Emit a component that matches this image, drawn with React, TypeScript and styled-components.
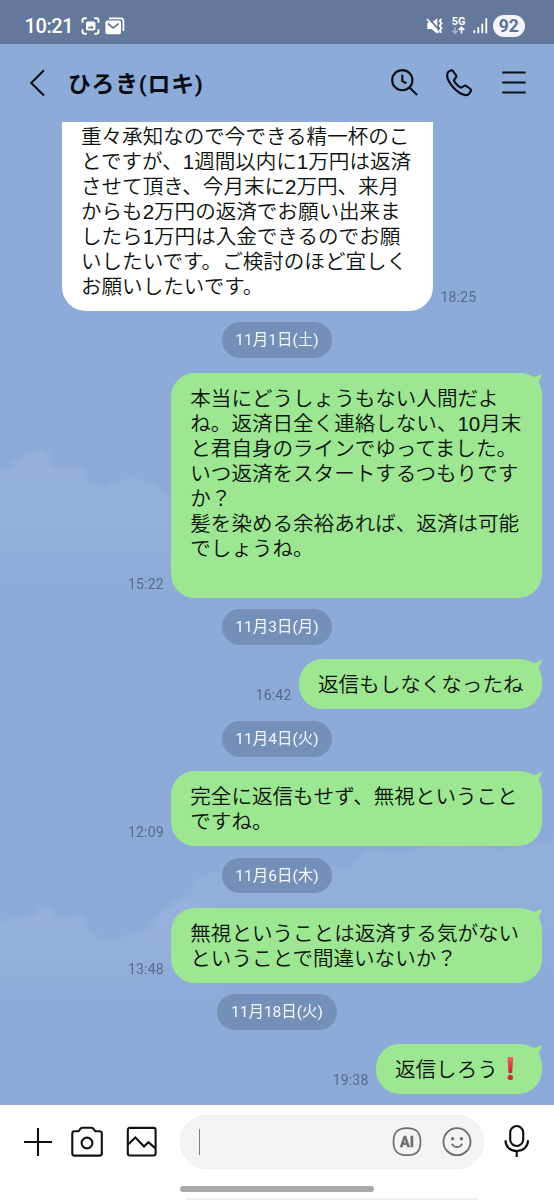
import React from "react";
import styled, { createGlobalStyle, css } from "styled-components";

const GlobalStyle = createGlobalStyle`
  *, *::before, *::after { box-sizing: border-box; }
  body { margin: 0; background: #8dabd9; }
`;

const Screen = styled.div`
  position: relative;
  display: flex;
  flex-direction: column;
  width: 554px;
  height: 1200px;
  overflow: hidden;
  background: #8dabd9;
  font-family: Roboto, "Noto Sans CJK JP", sans-serif;
`;

const Sky = styled.svg`
  position: absolute;
  left: 0;
  top: 0;
  pointer-events: none;
`;

const StatusBar = styled.div`
  position: relative;
  display: flex;
  align-items: center;
  justify-content: space-between;
  flex: none;
  height: 43.5px;
  padding: 9px 29px 0 24.5px;
  background: #63789a;
  color: #fff;
`;

const StatusGroup = styled.div<{ $gap: number }>`
  display: flex;
  align-items: center;
  gap: ${(p) => p.$gap}px;
`;

const Clock = styled.span`
  width: 50.5px;
  font: 500 20px/24px Roboto, sans-serif;
  letter-spacing: -0.4px;
  white-space: nowrap;
`;

const Battery = styled.span`
  width: 32.5px;
  height: 22px;
  border-radius: 11px;
  background: #f2f6fc;
  color: #5c7193;
  font: 700 17.5px/22.5px Roboto, sans-serif;
  text-align: center;
`;

const Header = styled.header`
  position: relative;
  display: flex;
  align-items: center;
  flex: none;
  height: 78.5px;
  padding: 0 28.5px 0 28px;
`;

const Title = styled.h1`
  flex: 1;
  margin: 0 0 0 21px;
  padding-top: 4px;
  color: #080b12;
  font: 700 22.8px/30px Roboto, "Noto Sans CJK JP", sans-serif;
  letter-spacing: 0.8px;
  white-space: nowrap;
`;

const HeaderActions = styled.div`
  display: flex;
  align-items: center;
  gap: 28px;
`;

const Icon = styled.svg`
  display: block;
  flex: none;
  overflow: visible;
`;

const Thread = styled.main`
  position: relative;
  display: flex;
  flex-direction: column;
  flex: none;
  height: 983px;
  padding: 0.4px 12px 0 62px;
`;

const Row = styled.div<{ $mine: boolean }>`
  display: flex;
  align-items: flex-end;
  flex-direction: ${(p) => (p.$mine ? "row-reverse" : "row")};
  gap: 7.5px;
`;

const Bubble = styled.div<{ $mine: boolean; $width: number }>`
  position: relative;
  flex: none;
  width: ${(p) => p.$width}px;
  padding: 13px 0 12px 19px;
  border-radius: 24px;
  background: #9de793;
  color: #0b110c;
  font-family: "Liberation Sans", "Noto Sans CJK JP", sans-serif;
  font-size: 20.55px;
  font-weight: 350;
  line-height: 25px;
  white-space: pre;
  ${(p) =>
    !p.$mine &&
    css`
      padding-top: 1.6px;
      padding-bottom: 12px;
      border-radius: 0 0 24px 24px;
      background: #fff;
    `}
`;

const Tail = styled.svg`
  position: absolute;
  right: 0;
  top: 0;
`;

const Stamp = styled.time`
  padding-bottom: 5px;
  color: #55698c;
  font: 400 14px/18px Roboto, sans-serif;
  letter-spacing: 0.2px;
`;

const DatePill = styled.div<{ $width: number }>`
  align-self: center;
  flex: none;
  width: ${(p) => p.$width}px;
  height: 35.8px;
  margin: 11.5px 0 14.4px -50px;
  padding-top: 1px;
  border-radius: 18px;
  background: #7590b8;
  color: #f4f8ff;
  font-size: 15.5px;
  line-height: 35px;
  text-align: center;
  white-space: nowrap;
`;

const Emoji = styled.svg`
  display: inline-block;
  vertical-align: top;
`;

const Composer = styled.footer`
  position: relative;
  display: flex;
  flex-direction: column;
  flex: none;
  height: 95px;
  background: #fff;
`;

const Tools = styled.div`
  display: flex;
  align-items: center;
  height: 73px;
  padding: 0 24px 0 23px;
`;

const Field = styled.div`
  display: flex;
  align-items: center;
  width: 305.5px;
  height: 54px;
  margin: 0 20px 0 22px;
  padding: 0 11.5px 0 18px;
  border: 1px solid #efefef;
  border-radius: 27px;
  background: #f4f4f4;
`;

const Caret = styled.span`
  width: 1.3px;
  height: 26px;
  margin-right: auto;
  background: #808080;
`;

const HomeBar = styled.div`
  width: 194px;
  height: 6px;
  margin: 8px 0 0 180px;
  border-radius: 3px;
  background: #aaa;
`;

const BottomEdge = styled.div`
  width: 292px;
  height: 2px;
  margin: 6px 0 0 186px;
  background: #f1f1f1;
`;

function Clouds() {
  return (
    <Sky width="554" height="1105" viewBox="0 0 554 1105">
      <defs>
        <filter id="soft" x="-10%" y="-10%" width="120%" height="120%">
          <feGaussianBlur stdDeviation="2.5" />
        </filter>
        <linearGradient id="fade" x1="0" y1="0" x2="0" y2="1">
          <stop offset="0" stopColor="#a6bce2" stopOpacity="0.36" />
          <stop offset="0.5" stopColor="#9db9e0" stopOpacity="0.36" />
          <stop offset="1" stopColor="#8dabd9" stopOpacity="0" />
        </linearGradient>
      </defs>
      <g fill="url(#fade)" filter="url(#soft)">
        <path d="M-10 475 L8 470 Q14 457 28 455 L40 448 L50 454 L52 466 Q62 471 70 465 L82 467 L86 478 L106 490 Q112 480 128 479 Q156 478 164 494 L200 520 V612 H-10Z" />
        <path d="M-10 922 L10 920 L34 915 L44 904 L54 910 L58 921 L82 914 L90 933 L110 940 L150 928 L160 912 L180 900 L220 910 V1020 H-10Z" />
        <path d="M150 928 L164 910 L184 894 L200 876 L224 868 L300 864 L345 870 L370 850 L400 852 L450 842 L500 850 L560 838 V1000 H150Z" opacity="0.7" />
      </g>
    </Sky>
  );
}

function BubbleTail() {
  return (
    <Tail width="24" height="24" viewBox="0 0 24 24">
      <path d="M0 0 C6 0 11 1.5 15.5 3.8 C18.5 3.6 21.5 2.5 24 0.5 C23.5 3.5 22 6.5 20.5 8.8 C22.8 13 24 18 24 24 H0Z" fill="#9de793" />
    </Tail>
  );
}

function Exclamation() {
  return (
    <Emoji width="25" height="25" viewBox="0 0 25 25" role="img" aria-label="❗">
      <defs>
        <linearGradient id="red" x1="0" y1="0" x2="0" y2="1">
          <stop offset="0" stopColor="#f4696b" />
          <stop offset="0.5" stopColor="#e23a45" />
          <stop offset="1" stopColor="#c4232f" />
        </linearGradient>
      </defs>
      <g transform="translate(0 -0.8)">
        <path d="M9.4 0.3 H15.2 L14.2 16 Q12.3 18 10.5 16 Z" fill="url(#red)" />
        <circle cx="12.3" cy="21.2" r="2.7" fill="#d32b36" />
      </g>
    </Emoji>
  );
}

type MessageProps = {
  mine?: boolean;
  width: number;
  time: string;
  children: React.ReactNode;
};

function Message({ mine = false, width, time, children }: MessageProps) {
  return (
    <Row $mine={mine}>
      <Bubble $mine={mine} $width={width}>
        {mine && <BubbleTail />}
        {children}
      </Bubble>
      <Stamp>{time}</Stamp>
    </Row>
  );
}

const received = [
  "重々承知なので今できる精一杯のこ",
  "とですが、1週間以内に1万円は返済",
  "させて頂き、今月末に2万円、来月",
  "からも2万円の返済でお願い出来ま",
  "したら1万円は入金できるのでお願",
  "いしたいです。ご検討のほど宜しく",
  "お願いしたいです。",
].join("\n");

const sent = [
  "本当にどうしょうもない人間だよ",
  "ね。返済日全く連絡しない、10月末",
  "と君自身のラインでゆってました。",
  "いつ返済をスタートするつもりです",
  "か？",
  "髪を染める余裕あれば、返済は可能",
  "でしょうね。",
  " ",
].join("\n");

export default function App() {
  return (
    <Screen>
      <GlobalStyle />
      <Clouds />
      <StatusBar>
        <StatusGroup $gap={6}>
          <Clock>10:21</Clock>
          <StatusGroup $gap={5}>
            <Icon width="19" height="18" viewBox="0 0 19 18" fill="none" stroke="#fff" strokeWidth="1.9" strokeLinecap="round">
              <path d="M1.5 5V3.5Q1.5 1.2 4 1.2H5M14 1.2h1Q17.5 1.2 17.5 3.5V5M1.5 13v1.5Q1.5 16.8 4 16.8H5M14 16.8h1q2.5 0 2.5-2.3V13" />
              <rect x="5" y="4.5" width="9.4" height="9" rx="1.8" fill="#fff" stroke="none" />
              <path d="M6.6 11.5 L8 9.3 L9.3 10.3 L11 8.2 L12.8 11.5Z" fill="#63789a" stroke="none" />
            </Icon>
            <Icon width="20" height="18" viewBox="0 0 20 18">
              <path d="M4 1.3H16Q18.4 1.3 18.4 4V14" fill="none" stroke="#fff" strokeWidth="1.7" />
              <rect x="0.4" y="3.6" width="15.6" height="13.6" rx="2" fill="#fff" />
              <path d="M2.8 6.5 L8.2 10.8 L13.6 6.5" fill="none" stroke="#63789a" strokeWidth="1.7" />
            </Icon>
          </StatusGroup>
        </StatusGroup>
        <StatusGroup $gap={5}>
          <Icon width="61" height="22" viewBox="0 0 61 22">
            <path d="M0.3 7.8H4.5L10.3 3.3V18.7L4.5 14H0.3Z" fill="#fff" />
            <path d="M1.4 2.9 L13 16.2" stroke="#63789a" strokeWidth="1.8" />
            <path d="M0 4 L12 17.7" stroke="#fff" strokeWidth="1.6" />
            <path d="M14.3 3.8 L12.8 6 L14.5 8.3 L12.8 10.8 L14.5 13.2 L12.8 15.5 L14.3 17.8" fill="none" stroke="#fff" strokeWidth="1.8" />
            <text x="24.7" y="10.3" fill="#fff" fontFamily="Roboto, sans-serif" fontWeight="700" fontSize="10.8">5G</text>
            <path d="M28 12V18M25.3 15.6L28 18.3L30.7 15.6" fill="none" stroke="#aab8cf" strokeWidth="1.4" />
            <path d="M34.5 18.5V12.6M31.8 15L34.5 12.3L37.2 15" fill="none" stroke="#fff" strokeWidth="1.7" />
            <path d="M47.3 15.8V17.5M51.3 12.8V17.5M55.3 9.3V17.5M59.3 3.8V17.5" fill="none" stroke="#fff" strokeWidth="1.8" strokeLinecap="round" />
          </Icon>
          <Battery>92</Battery>
        </StatusGroup>
      </StatusBar>

      <Header>
        <Icon width="19" height="28" viewBox="0 0 19 28" fill="none" stroke="#0b0e15" strokeWidth="2">
          <path d="M16 1.3 L3.2 14 L16 26.5" />
        </Icon>
        <Title>ひろき(ロキ)</Title>
        <HeaderActions>
          <Icon width="28" height="28" viewBox="0 0 28 28" fill="none" stroke="#0b0e15" strokeWidth="2.1">
            <circle cx="11.3" cy="11.2" r="10.1" />
            <path d="M18.5 18.4 L26.1 25.9M11.3 5.8V12.1L15.4 14.2" />
          </Icon>
          <Icon width="27" height="28" viewBox="0 0 27 28" fill="none" stroke="#0b0e15" strokeWidth="2.1" strokeLinejoin="round">
            <path transform="translate(-1.2 0)" d="M3.2 2.4 L5.2 1.5 Q6.4 1 7.2 2 L10.3 6.3 Q11 7.4 10.2 8.4 L8.2 10.8 Q8 12.5 11 15.5 Q14.3 18.9 15.8 18.5 L18.3 16.8 Q19.3 16.1 20.3 16.8 L24.6 20 Q25.7 20.9 25 22.1 L23.6 24.4 Q22.2 26.5 19 26 Q13.6 25 7.8 18.8 Q2.2 12.6 1.4 7.5 Q1 3.8 3.2 2.4Z" />
          </Icon>
          <Icon width="24" height="28" viewBox="0 0 24 28" stroke="#0b0e15" strokeWidth="2">
            <path d="M0.2 3.4H23.6M0.2 13.4H23.6M0.2 23.4H23.6" />
          </Icon>
        </HeaderActions>
      </Header>

      <Thread>
        <Message width={371} time="18:25">{received}</Message>
        <DatePill $width={110.5}>11月1日(土)</DatePill>
        <Message mine width={370.7} time="15:22">{sent}</Message>
        <DatePill $width={110.5}>11月3日(月)</DatePill>
        <Message mine width={243} time="16:42">返信もしなくなったね</Message>
        <DatePill $width={110.5}>11月4日(火)</DatePill>
        <Message mine width={370.7} time="12:09">{"完全に返信もせず、無視ということ\nですね。"}</Message>
        <DatePill $width={110.5}>11月6日(木)</DatePill>
        <Message mine width={370.7} time="13:48">{"無視ということは返済する気がない\nということで間違いないか？"}</Message>
        <DatePill $width={119.5}>11月18日(火)</DatePill>
        <Message mine width={166} time="19:38">
          返信しろう<Exclamation />
        </Message>
      </Thread>

      <Composer>
        <Tools>
          <Icon width="135" height="32" viewBox="0 0 135 32" fill="none" stroke="#111" strokeWidth="2.1" strokeLinejoin="round">
            <path d="M1 16H29M15 2V30" />
            <path d="M51.5 5.2H55.6L58 2.2Q58.5 1.7 59.2 1.7H68.6Q69.3 1.7 69.8 2.2L72.2 5.2H76.5Q78.8 5.2 78.8 7.3V27.5Q78.8 29.6 76.5 29.6H51.5Q49.3 29.6 49.3 27.5V7.3Q49.3 5.2 51.5 5.2Z" />
            <circle cx="64" cy="17" r="5.4" />
            <rect x="104.8" y="1.9" width="27.8" height="27.6" rx="2" />
            <path d="M105 18.6 L112.4 11.6 L121 20.6 L125.4 16.2 L132.4 22.4" strokeLinejoin="miter" />
          </Icon>
          <Field>
            <Caret />
            <Icon width="80" height="30" viewBox="0 0 80 30" fill="none" stroke="#6e6e6e" strokeWidth="1.8">
              <path d="M15 1.2C24.5 1.2 28.5 5.2 28.5 14.7S24.5 28.2 15 28.2S1.5 24.2 1.5 14.7S5.5 1.2 15 1.2Z" />
              <text x="15" y="19.7" textAnchor="middle" fill="#6e6e6e" stroke="#6e6e6e" strokeWidth="0.3" fontFamily="Roboto, sans-serif" fontWeight="800" fontSize="14.5">AI</text>
              <circle cx="65" cy="14.7" r="13.5" />
              <g fill="#6e6e6e" stroke="none">
                <circle cx="60.6" cy="11.7" r="1.7" />
                <circle cx="69.4" cy="11.7" r="1.7" />
              </g>
              <path d="M60 16.8Q61 20 65 20T70 16.8" />
            </Icon>
          </Field>
          <Icon width="26" height="33" viewBox="0 0 26 33" fill="none" stroke="#0c0c0c" strokeWidth="2.1">
            <rect x="6.2" y="1" width="13" height="20" rx="6.5" />
            <path d="M1.5 15.2C1.5 21.7 6 26 12.7 26S24 21.7 24 15.2M12.7 26V32" />
          </Icon>
        </Tools>
        <HomeBar />
        <BottomEdge />
      </Composer>
    </Screen>
  );
}
